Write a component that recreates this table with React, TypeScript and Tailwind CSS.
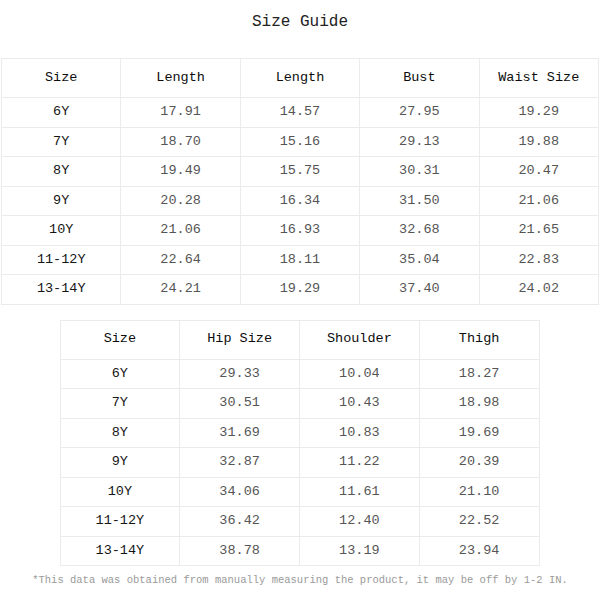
const top = {
  headers: ["Size", "Length", "Length", "Bust", "Waist Size"],
  rows: [
    ["6Y", "17.91", "14.57", "27.95", "19.29"],
    ["7Y", "18.70", "15.16", "29.13", "19.88"],
    ["8Y", "19.49", "15.75", "30.31", "20.47"],
    ["9Y", "20.28", "16.34", "31.50", "21.06"],
    ["10Y", "21.06", "16.93", "32.68", "21.65"],
    ["11-12Y", "22.64", "18.11", "35.04", "22.83"],
    ["13-14Y", "24.21", "19.29", "37.40", "24.02"],
  ],
};

const bottom = {
  headers: ["Size", "Hip Size", "Shoulder", "Thigh"],
  rows: [
    ["6Y", "29.33", "10.04", "18.27"],
    ["7Y", "30.51", "10.43", "18.98"],
    ["8Y", "31.69", "10.83", "19.69"],
    ["9Y", "32.87", "11.22", "20.39"],
    ["10Y", "34.06", "11.61", "21.10"],
    ["11-12Y", "36.42", "12.40", "22.52"],
    ["13-14Y", "38.78", "13.19", "23.94"],
  ],
};

function SizeTable({ headers, rows, className }: { headers: string[]; rows: string[][]; className: string }) {
  return (
    <table className={"table-fixed border-collapse text-[13.5px] " + className}>
      <thead>
        <tr className="h-[39px]">
          {headers.map((h, i) => (
            <th key={h + i} className="border border-[#ebebeb] font-normal text-[#0d0d0d] text-center">
              {h}
            </th>
          ))}
        </tr>
      </thead>
      <tbody>
        {rows.map((row) => (
          <tr key={row[0]} className="h-[29.5px]">
            {row.map((cell, i) => (
              <td
                key={i}
                className={
                  "border border-[#ebebeb] text-center " +
                  (i === 0 ? "text-[#151515]" : "text-[#555]")
                }
              >
                {cell}
              </td>
            ))}
          </tr>
        ))}
      </tbody>
    </table>
  );
}

export default function App() {
  return (
    <div
      className="w-[600px] h-[600px] bg-white flex flex-col items-center"
      style={{ fontFamily: '"Liberation Mono", "Noto Sans CJK SC", monospace' }}
    >
      <h1 className="mt-[11px] h-[22px] text-[16px] leading-[22px] text-[#222]">Size Guide</h1>
      <SizeTable headers={top.headers} rows={top.rows} className="mt-[25px] w-[598px]" />
      <SizeTable headers={bottom.headers} rows={bottom.rows} className="mt-[15px] w-[480px] -ml-[1px]" />
      <p className="mt-[7px] text-[10.5px] leading-[14px] text-[#9a9a9a]">
        *This data was obtained from manually measuring the product, it may be off by 1-2 IN.
      </p>
    </div>
  );
}
